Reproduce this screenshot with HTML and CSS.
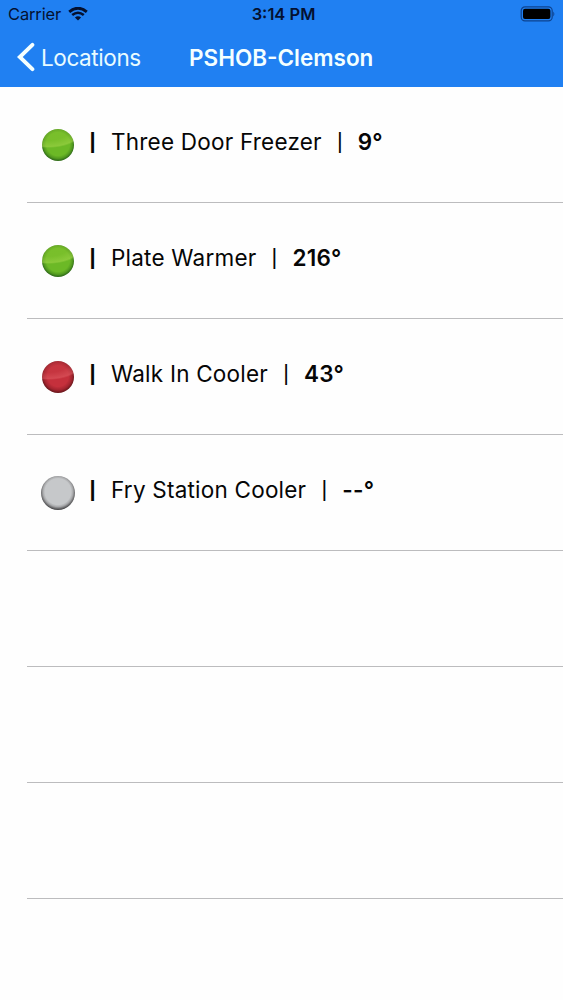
FILE: index.html
```
<!doctype html>
<html lang="en">

<head>
    <meta charset="utf-8">
    <title>PSHOB-Clemson</title>
    <link rel="stylesheet" href="styles.css">
</head>

<body>
    <header>
        <div class="status-bar">
            <div class="carrier">
                <span>Carrier</span>
                <svg class="wifi" width="20" height="14" viewBox="0 0 20 14">
                    <path d="M1.2 4.9 Q10 -2.4 18.8 4.9" fill="none" stroke="#041130" stroke-width="2.9" />
                    <path d="M4.2 8.1 Q10 3.4 15.8 8.1" fill="none" stroke="#041130" stroke-width="2.6" />
                    <path d="M6.9 10.6 Q10 7.9 13.1 10.6 L10 13.6 Z" fill="#041130" />
                </svg>
            </div>
            <span class="time">3:14 PM</span>
            <svg class="battery" width="36" height="16" viewBox="0 0 36 16">
                <rect x="2.2" y="0.9" width="31" height="14" rx="3.8" fill="none" stroke="#0d4390" stroke-width="1.2" />
                <rect x="4" y="2.7" width="27.4" height="10.4" rx="2" fill="#000" />
                <path d="M34.4 5.6 Q36.2 8 34.4 10.4 Z" fill="#0d3a80" />
            </svg>
        </div>
        <nav>
            <a href="#" class="back">
                <svg width="19" height="30" viewBox="0 0 19 30">
                    <path d="M15.4 2.8 L2.8 15 L15.4 27.2" fill="none" stroke="#f4ffff" stroke-width="3.9" stroke-linecap="round" />
                </svg>
                <span>Locations</span>
            </a>
            <h1>PSHOB-Clemson</h1>
        </nav>
    </header>

    <ul class="sensors">
        <li>
            <span class="light green"></span>
            <span class="bar bold">|</span>
            <span class="name">Three Door Freezer</span>
            <span class="bar">|</span>
            <span class="temp">9°</span>
        </li>
        <li>
            <span class="light green"></span>
            <span class="bar bold">|</span>
            <span class="name">Plate Warmer</span>
            <span class="bar">|</span>
            <span class="temp">216°</span>
        </li>
        <li>
            <span class="light red"></span>
            <span class="bar bold">|</span>
            <span class="name">Walk In Cooler</span>
            <span class="bar">|</span>
            <span class="temp">43°</span>
        </li>
        <li>
            <span class="light gray"></span>
            <span class="bar bold">|</span>
            <span class="name">Fry Station Cooler</span>
            <span class="bar">|</span>
            <span class="temp">--°</span>
        </li>
        <li></li>
        <li></li>
        <li></li>
    </ul>
</body>

</html>
```
FILE: styles.css
```
* {
    margin: 0;
    padding: 0;
    box-sizing: border-box;
}

body {
    height: 1000px;
    background-color: #fefefe;
    font-family: Inter, "Liberation Sans", sans-serif;
    color: #060606;
    overflow: hidden;
}

header {
    height: 87px;
    background-color: #2080f2;
}

.status-bar {
    height: 28px;
    padding: 0 8px;
    display: grid;
    grid-template-columns: 1fr auto 1fr;
    align-items: center;
    font-size: 16.5px;
    color: #041130;
}

.carrier {
    display: flex;
    align-items: center;
    gap: 7px;
    letter-spacing: -0.15px;
}

.wifi {
    margin-top: -1px;
}

.time {
    padding-left: 4px;
    font-weight: 600;
}

.battery {
    justify-self: end;
}

nav {
    height: 58px;
    display: grid;
    grid-template-columns: 172px auto 1fr;
    padding-left: 17px;
    align-items: center;
    color: #f4ffff;
}

.back {
    display: flex;
    align-items: center;
    gap: 5px;
    color: #e8fbff;
    font-size: 22.5px;
    letter-spacing: -0.4px;
    text-decoration: none;
}

h1 {
    font-size: 22.5px;
    font-weight: 600;
}

.sensors {
    list-style: none;
    padding-left: 27px;
}

.sensors li {
    height: 116px;
    padding: 38px 0 0 14px;
    display: flex;
    align-items: flex-start;
    border-bottom: 1px solid #bcbcbe;
    font-size: 22.5px;
    line-height: 34px;
    white-space: nowrap;
}

.light {
    width: 32px;
    height: 32px;
    margin: 4px 17px 0 1px;
    border-radius: 50%;
}

.green {
    background: radial-gradient(ellipse 36px 19px at 20% 0%, rgba(140, 200, 50, 0.4) 60%, rgba(165, 215, 75, 0.55) 92%, transparent 100%), radial-gradient(circle at 50% 47%, #6cb926 50%, #529a1f 62%, #33701a 70%);
}

.red {
    background: radial-gradient(ellipse 36px 19px at 20% 0%, rgba(200, 65, 72, 0.3) 60%, rgba(226, 98, 104, 0.5) 92%, transparent 100%), radial-gradient(circle at 50% 47%, #c5303c 45%, #a3242f 60%, #6f181e 70%);
}

.gray {
    width: 34px;
    height: 34px;
    margin: 3px 16px 0 0;
    background: radial-gradient(circle at 50% 46%, #c6c8ca 52%, #a8a9ab 60%, #707072 67%, #3e3e40 73%);
}

.bar {
    width: 2px;
    margin: -1px 17px 0;
    display: flex;
    justify-content: center;
    font-family: "Liberation Sans", sans-serif;
    font-size: 22px;
}

.bold {
    width: 3px;
    margin-left: 0;
    font-weight: bold;
}

.name {
    letter-spacing: 0.22px;
}

.temp {
    font-weight: 600;
    letter-spacing: 0.2px;
}
```
